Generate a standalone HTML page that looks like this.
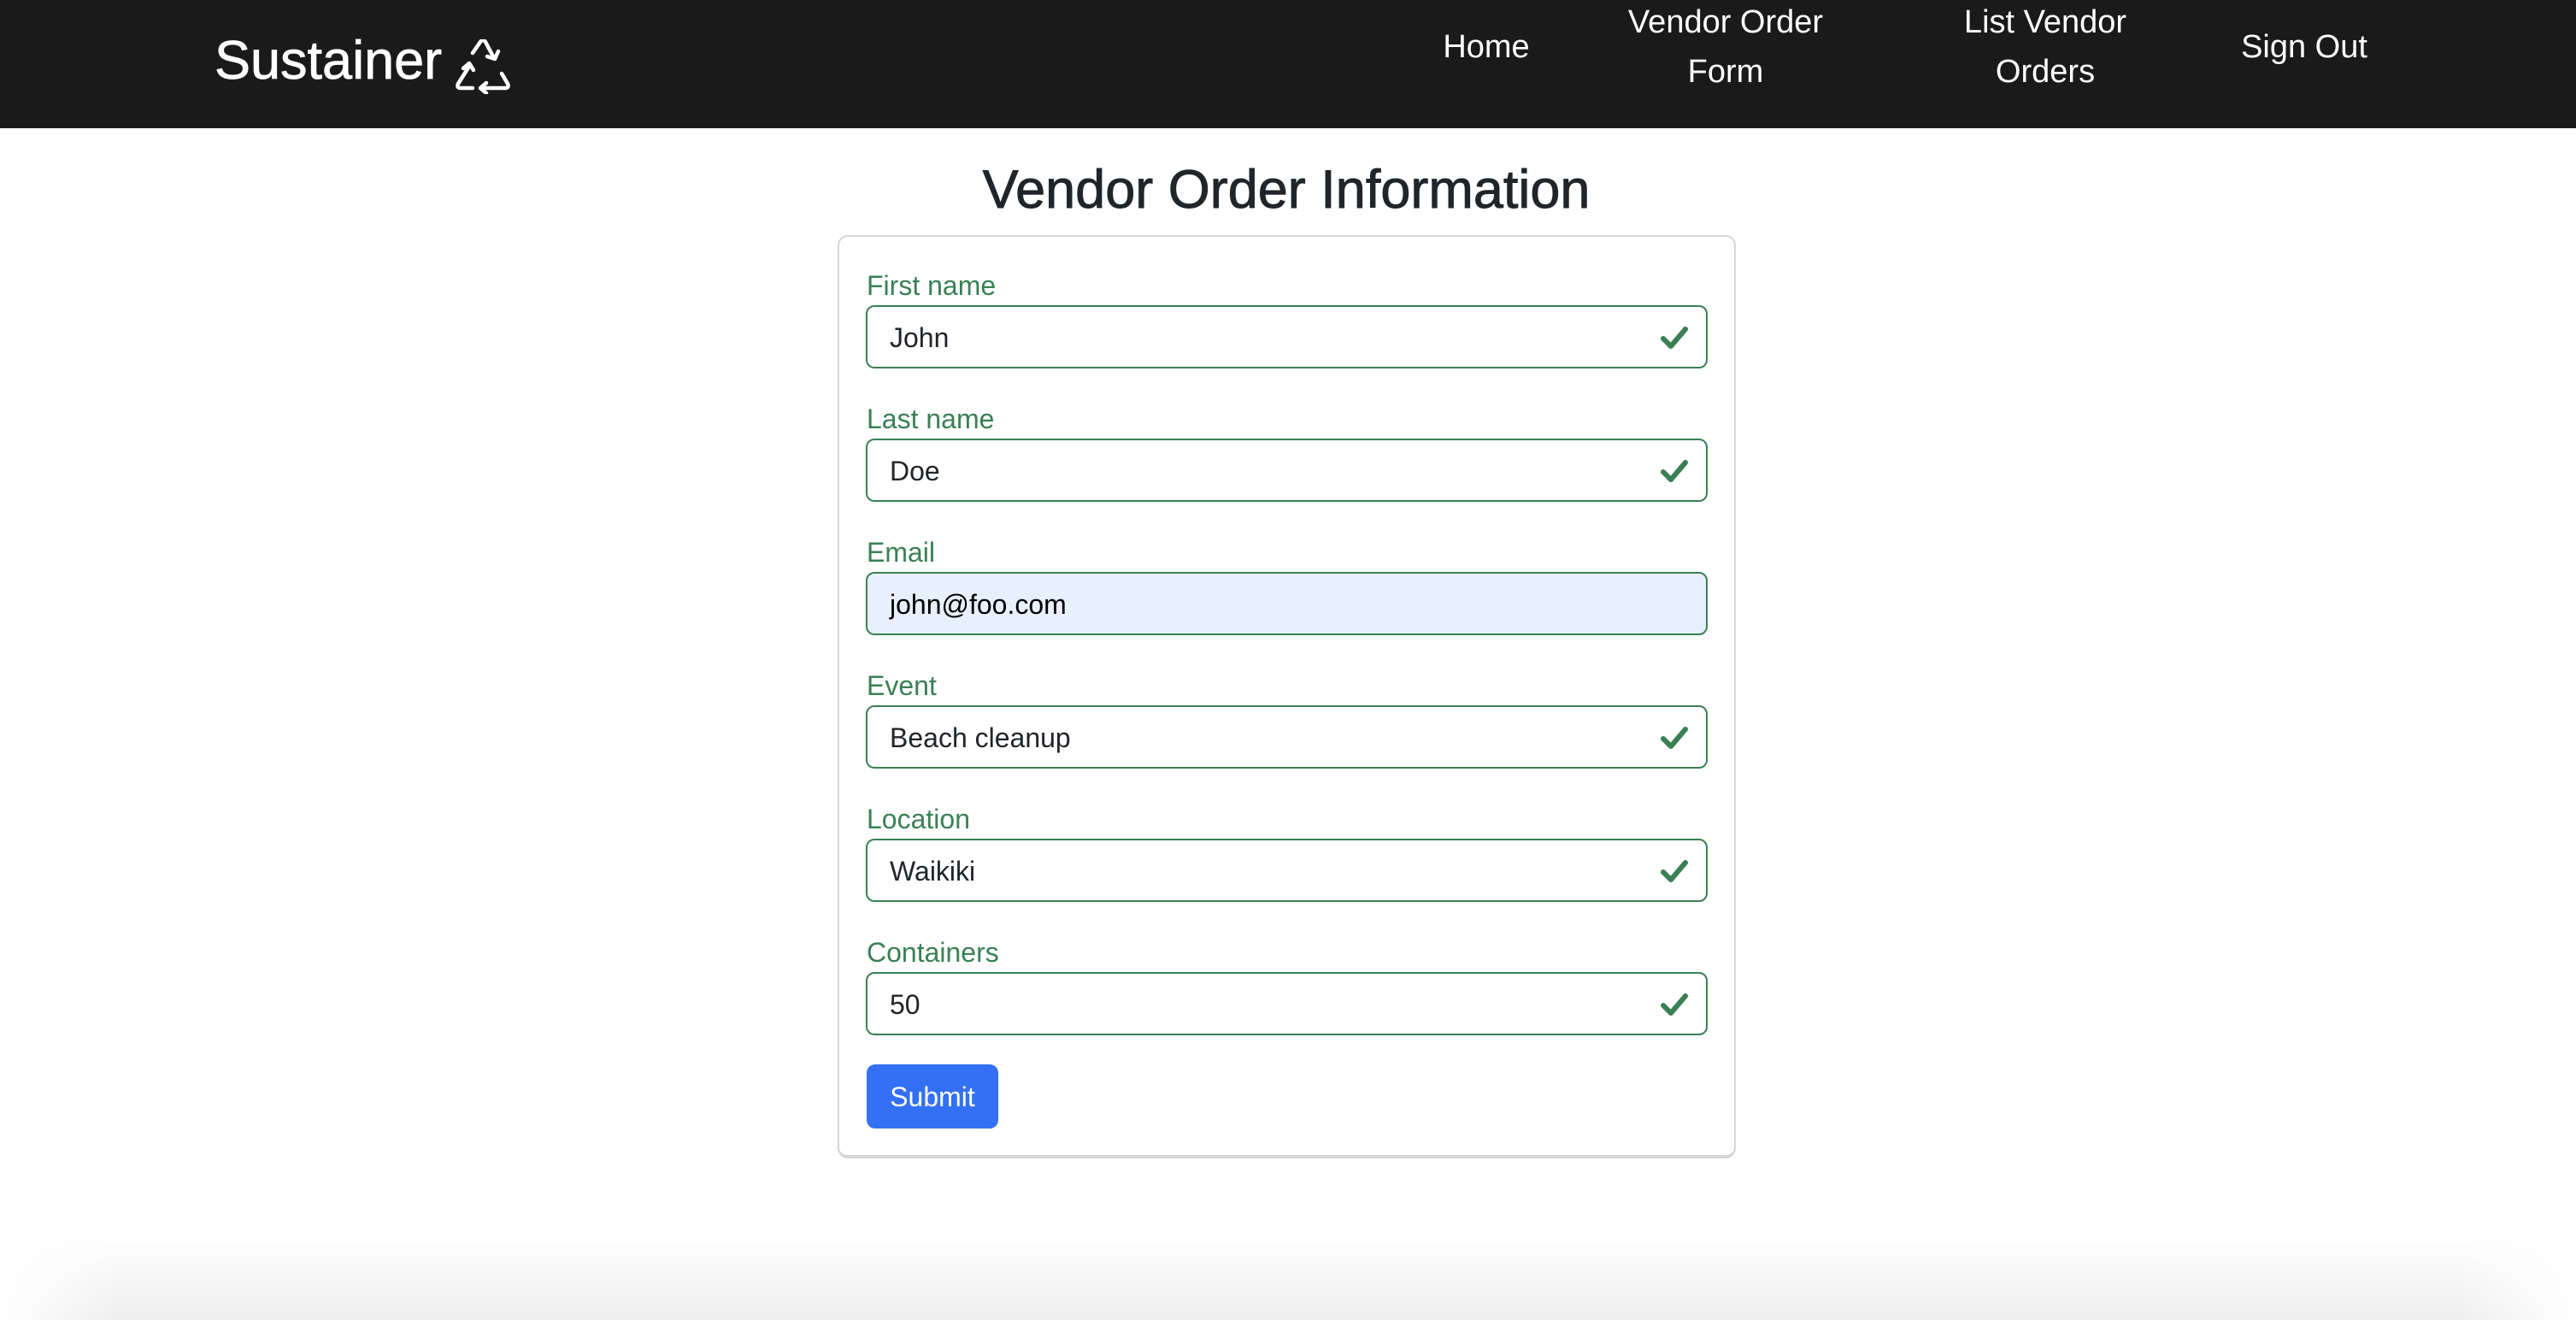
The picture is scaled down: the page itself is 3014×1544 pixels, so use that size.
<!DOCTYPE html>
<html><head><meta charset="utf-8"><style>
*{box-sizing:border-box;margin:0;padding:0}
html,body{width:3014px;height:1544px;overflow:hidden}
body{background:#fff;font-family:"Liberation Sans",sans-serif;position:relative}
.nav{position:absolute;left:0;top:0;width:3014px;height:150px;background:#1b1a1b}
.logo{position:absolute;left:251px;top:31px;font-size:63px;color:#fff;-webkit-text-stroke:0.8px #fff;line-height:80px}
.nl{position:absolute;color:#fff;font-size:38px;line-height:58px;text-align:center;transform:translateX(-50%);white-space:nowrap}
h1{position:absolute;left:0;width:3010px;text-align:center;top:182px;font-size:63px;font-weight:normal;color:#212529;-webkit-text-stroke:0.9px #212529;line-height:80px}
.card{position:absolute;left:980px;top:275px;width:1051px;height:1080px;border:2px solid #d6d6d6;border-radius:12px;border-bottom-width:4px}
.lab{position:absolute;left:1014px;font-size:32px;color:#3a8055;line-height:40px}
.inp{position:absolute;left:1013px;width:985px;height:74px;border:2px solid #3a8055;border-radius:10px;font-size:32px;color:#212529;padding-left:26px;line-height:72px}
.inp svg{position:absolute;right:20px;top:22px}
.btn{position:absolute;left:1014px;top:1245px;width:154px;height:75px;background:#3370f5;border-radius:10px;color:#fff;font-size:32px;text-align:center;line-height:77px}
.sh{position:absolute;left:0;bottom:0;width:3014px;height:100px;background:linear-gradient(to bottom,rgba(0,0,0,0),rgba(0,0,0,0.065));-webkit-mask-image:linear-gradient(to right,transparent 0,#000 140px,#000 2874px,transparent 3014px)}
</style></head><body>
<div class="nav">
<div class="logo">Sustainer</div>
<svg style="position:absolute;left:533px;top:46px" width="66" height="64" viewBox="0 0 66 64" fill="none" stroke="#fff" stroke-width="4.5" stroke-linecap="round" stroke-linejoin="round">
<path d="M20 16 L29 3 Q32 -1 35 3 L45 22"/><path d="M37 20 L46 23 L50 14"/>
<path d="M17 30 L3 52 Q1 57 6 57 L20 57"/><path d="M9 34 L16 28 L21 36"/>
<path d="M30 57 L58 57 Q63 57 61 52 L54 40"/><path d="M36 51 L29 57 L36 63"/>
</svg>
<div class="nl" style="left:1739px;top:26px">Home</div>
<div class="nl" style="left:2019px;top:-3px">Vendor Order<br>Form</div>
<div class="nl" style="left:2393px;top:-3px">List Vendor<br>Orders</div>
<div class="nl" style="left:2696px;top:26px">Sign Out</div>
</div>
<h1>Vendor Order Information</h1>
<div class="card"></div>

<div class="lab" style="top:314px">First name</div>
<div class="inp" style="top:357px">John<svg width="34" height="28" viewBox="0 0 34 28"><path d="M4 15 L13 24 L30 4" stroke="#3a8055" stroke-width="6" fill="none" stroke-linecap="round" stroke-linejoin="round"/></svg></div>
<div class="lab" style="top:470px">Last name</div>
<div class="inp" style="top:513px">Doe<svg width="34" height="28" viewBox="0 0 34 28"><path d="M4 15 L13 24 L30 4" stroke="#3a8055" stroke-width="6" fill="none" stroke-linecap="round" stroke-linejoin="round"/></svg></div>
<div class="lab" style="top:626px">Email</div>
<div class="inp" style="top:669px;background:#e8f0fe;color:#000">john@foo.com</div>
<div class="lab" style="top:782px">Event</div>
<div class="inp" style="top:825px">Beach cleanup<svg width="34" height="28" viewBox="0 0 34 28"><path d="M4 15 L13 24 L30 4" stroke="#3a8055" stroke-width="6" fill="none" stroke-linecap="round" stroke-linejoin="round"/></svg></div>
<div class="lab" style="top:938px">Location</div>
<div class="inp" style="top:981px">Waikiki<svg width="34" height="28" viewBox="0 0 34 28"><path d="M4 15 L13 24 L30 4" stroke="#3a8055" stroke-width="6" fill="none" stroke-linecap="round" stroke-linejoin="round"/></svg></div>
<div class="lab" style="top:1094px">Containers</div>
<div class="inp" style="top:1137px">50<svg width="34" height="28" viewBox="0 0 34 28"><path d="M4 15 L13 24 L30 4" stroke="#3a8055" stroke-width="6" fill="none" stroke-linecap="round" stroke-linejoin="round"/></svg></div>
<div class="btn">Submit</div>
<div class="sh"></div>
</body></html>
